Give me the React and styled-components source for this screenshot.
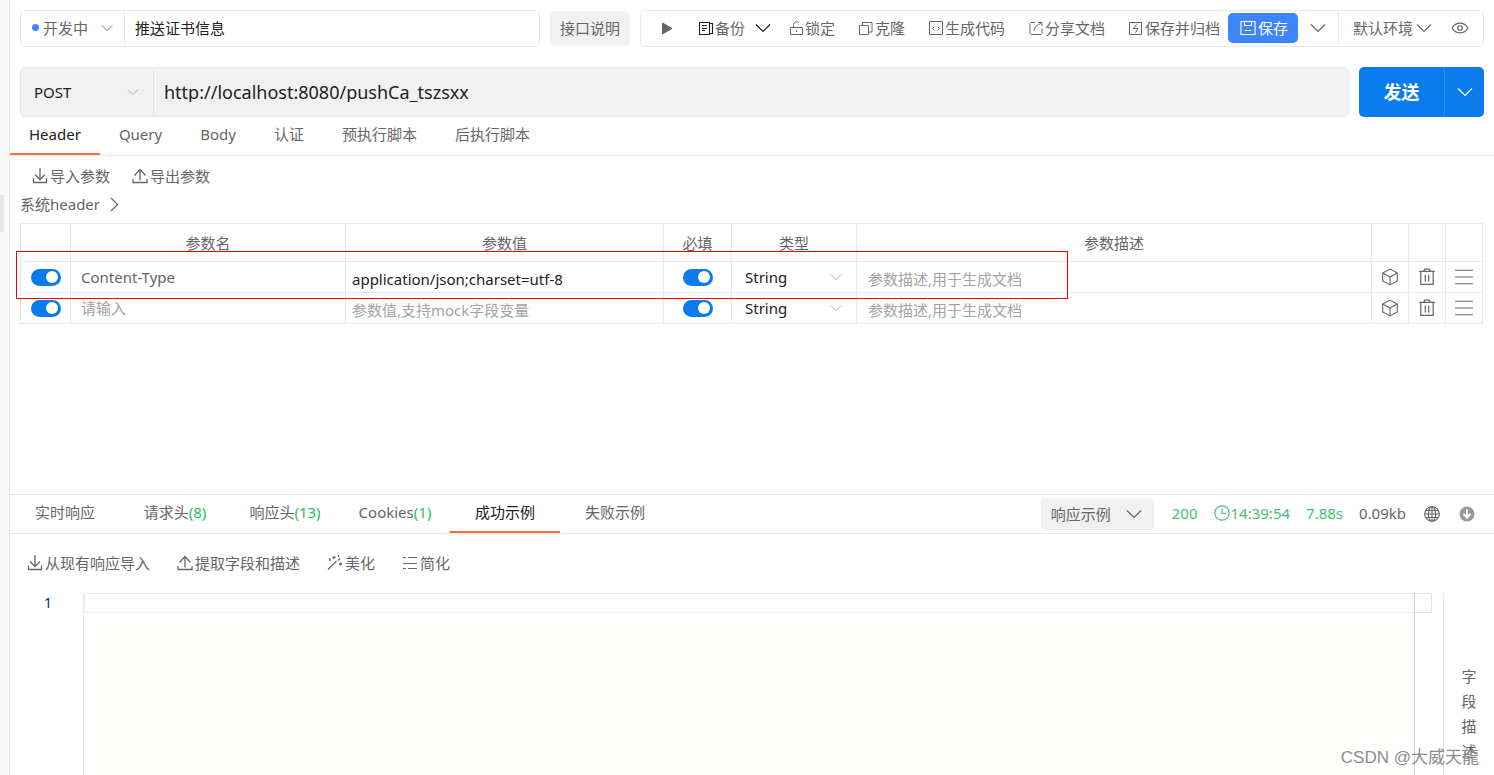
import React, { useState } from 'react';
import styled, { ThemeProvider, createGlobalStyle, css } from 'styled-components';

const theme = {
  colors: {
    text: '#666666',
    dark: '#212121',
    placeholder: '#a3a3a3',
    border: '#e9e9e9',
    fill: '#f1f1f1',
    blue: '#097bed',
    saveBlue: '#3c85ff',
    orange: '#ff6c37',
    green: '#3fc36f',
    countGreen: '#1fbf5c',
    red: '#f00000',
  },
};

const GlobalStyle = createGlobalStyle`
  *,
  *::before {
    box-sizing: border-box;
  }

  body {
    margin: 0;
    overflow: hidden;
    background: #fff;
  }

  body,
  button,
  input,
  select,
  textarea {
    font-family: 'Noto Sans', 'Noto Sans CJK SC', sans-serif;
    font-size: 15px;
    line-height: 20px;
  }

  button,
  input,
  select,
  textarea {
    border: 0;
    margin: 0;
    padding: 0;
    background: none;
    color: inherit;
    outline: none;
  }

  button,
  select {
    cursor: pointer;
  }
`;

/* ---------- icons ---------- */

const Svg = styled.svg`
  display: block;
  flex: none;
  fill: none;
  stroke: currentColor;
  stroke-width: ${({ $weight }) => $weight || 1};
`;

const Icon = ({ size = 16, weight, children }) => (
  <Svg width={size} height={size} viewBox="0 0 16 16" $weight={weight} aria-hidden="true">
    {children}
  </Svg>
);

const ChevronDown = ({ size, weight }) => (
  <Icon size={size} weight={weight || 1.2}><path d="M1 4.5l7 7 7-7" /></Icon>
);
const ChevronRight = () => <Icon weight={1.2}><path d="M5 2l6.500 6.500-6.500 6.500" /></Icon>;
const Play = () => (
  <Icon><path d="M3.500 3L13 8.500l-9.500 5.500z" fill="currentColor" strokeLinejoin="round" /></Icon>
);
const Backup = () => (
  <Icon weight={1.1}>
    <path d="M1.500 2.500h10v12h-10zM11.500 3.500h3v10h-3M4 5.500h5M4 8.500h5M4 10.500h3" />
  </Icon>
);
const Lock = () => (
  <Icon>
    <path d="M2.500 7.500h12v7h-12zM5.500 7.500V4.500a3 3 0 0 1 5.500-1.500M8.500 10v2" />
  </Icon>
);
const Clone = () => (
  <Icon><path d="M1.500 5.500h9v9h-9zM4.500 5.500v-3h9.500v9.500h-3.500" strokeLinejoin="round" /></Icon>
);
const Code = () => (
  <Icon><path d="M1.500 1.500h13v13h-13zM6.500 6.500L4.500 8.500l2 2M9.500 6.500l2 2-2 2" /></Icon>
);
const Share = () => (
  <Icon><path d="M7 2.500H3l-1 1v10l1 1h10l1-1V8.500M6 10.500C6.500 7 9 4.500 13 3.500M10 2.500h4V6" /></Icon>
);
const Archive = () => (
  <Icon><path d="M1.500 2.500h12v12h-12zM8.500 4.500L5.500 8.500h4.500L7.500 12.500" /></Icon>
);
const Save = () => (
  <Icon weight={1.2}><path d="M1 1.500h14v13H1zM4.500 1.500v4h7v-4M5 10.500h6" /></Icon>
);
const Eye = () => (
  <Icon size={18} weight={1.1}>
    <path d="M1 8c3.500-5.800 10.500-5.800 14 0-3.500 5.800-10.500 5.800-14 0z" />
    <circle cx="8" cy="8" r="2" />
  </Icon>
);
const Import = () => (
  <Icon weight={1.3}><path d="M8 0v11.500M3 6.500L8 11.500l5-5M1.500 10.500v4h13v-4" /></Icon>
);
const Export = () => (
  <Icon weight={1.3}><path d="M8 12.500V1.500M2.500 7.500L8 1.500l5.500 6M1 11v3.500h14V11" /></Icon>
);
const Wand = () => (
  <Icon weight={1.3}>
    <path d="M1 14.500L9.500 6M7 1v3M5.500 2.500h3M11.500 0v2M13.500 7.500v3M12 9h3M2 5h2M2.500 3v1M13 3.500L11 5.500" />
  </Icon>
);
const Simplify = () => (
  <Icon weight={1.2}>
    <path d="M1 2.500h3M6 2.500h9M1 8.500h14M1 13.500h3M6 13.500h9" />
  </Icon>
);
const Cube = () => (
  <Icon size={18}>
    <path d="M8 1l6.500 3.500v7L8 15l-6.500-3.500v-7zM1.500 4.500L8 8l6.500-3.500M8 8v7" strokeLinejoin="round" />
  </Icon>
);
const Trash = () => (
  <Icon size={18} weight={1.1}>
    <path d="M1 3h14M5 3l1-2h4l1 2M2.500 3v11.500h11V3M6.500 6v6M9.500 6v6" />
  </Icon>
);
const Menu = () => (
  <Icon size={18} weight={1.1}><path d="M0 2h16M0 8h16M0 14h16" /></Icon>
);
const Clock = () => (
  <Icon weight={1.2}><circle cx="8" cy="8" r="7.200" /><path d="M8 3.500v5h4" /></Icon>
);
const Globe = () => (
  <Icon weight={1.1}>
    <circle cx="8" cy="8" r="7.300" />
    <ellipse cx="8" cy="8" rx="3.600" ry="7.300" />
    <path d="M8 .7v14.600M.7 8h14.600M2 4.500h12M2 11.500h12" />
  </Icon>
);
const Download = () => (
  <Icon>
    <circle cx="8" cy="8" r="7.500" fill="#999" stroke="none" />
    <path d="M8 3.500v7M4.500 8L8 11.500 11.500 8" stroke="#fff" strokeWidth="2" />
  </Icon>
);

/* ---------- shell ---------- */

const Page = styled.div`
  position: relative;
  display: flex;
  height: 100vh;
  overflow: hidden;
  color: ${({ theme }) => theme.colors.text};
`;

const Gutter = styled.aside`
  flex: none;
  width: 10px;
  padding-top: 195px;
  background: #f9f9f9;
  border-right: 1px solid ${({ theme }) => theme.colors.border};
`;

const Grip = styled.div`
  width: 4px;
  height: 37px;
  background: #e6e6e6;
`;

const Main = styled.main`
  flex: 1;
  min-width: 0;
  display: grid;
  grid-template-columns: minmax(0, 1fr);
  grid-template-rows: minmax(0, 494fr) minmax(0, 281fr);
`;

const Pane = styled.section`
  display: flex;
  flex-direction: column;
  min-width: 0;
`;

const ResponsePane = styled(Pane)`
  border-top: 1px solid ${({ theme }) => theme.colors.border};
`;

/* ---------- selects ---------- */

const SelectBox = styled.label`
  display: grid;
  align-items: center;
  width: ${({ $width }) => ($width ? `${$width}px` : 'auto')};
  padding: ${({ $pad }) => $pad || 0};
  color: ${({ theme, $dark }) => ($dark ? theme.colors.dark : 'inherit')};

  select {
    grid-area: 1 / 1;
    appearance: none;
    width: 100%;
  }

  svg {
    grid-area: 1 / 1;
    justify-self: end;
    pointer-events: none;
    color: ${({ $faint }) => ($faint ? '#aaa' : 'inherit')};
  }
`;

const Select = ({ label, options, chevron = 12, ...rest }) => (
  <SelectBox {...rest}>
    <select aria-label={label}>
      {options.map((option) => <option key={option}>{option}</option>)}
    </select>
    <ChevronDown size={chevron} />
  </SelectBox>
);

/* ---------- top bar ---------- */

const TopBar = styled.header`
  display: flex;
  align-items: center;
  gap: 10px;
  padding: 10px 10px 0;
`;

const boxed = css`
  display: flex;
  align-items: center;
  height: 37px;
  padding-bottom: 2px;
  border: 1px solid ${({ theme }) => theme.colors.border};
  border-radius: 5px;
`;

const NameBox = styled.div`
  ${boxed}
  flex: 1;
  min-width: 0;
  align-items: stretch;
  padding-bottom: 0;
`;

const Status = styled.div`
  display: flex;
  align-items: center;
  gap: 4px;
  width: 104px;
  padding: 0 11px 2px;
  border-right: 1px solid ${({ theme }) => theme.colors.border};
`;

const Dot = styled.span`
  width: 7px;
  height: 7px;
  border-radius: 50%;
  background: ${({ theme }) => theme.colors.saveBlue};
`;

const TextInput = styled.input`
  flex: 1;
  min-width: 0;
  width: 100%;
  padding: 0 10px ${({ $large }) => ($large ? 0 : '2px')};
  color: ${({ theme }) => theme.colors.dark};
  font-size: ${({ $large }) => ($large ? '18px' : '15px')};
`;

const NoteButton = styled.button`
  height: 35px;
  padding: 0 10px 2px;
  border-radius: 5px;
  background: ${({ theme }) => theme.colors.fill};
`;

const Toolbar = styled.div`
  ${boxed}
  padding-left: 18px;
`;

const Tools = styled.div`
  display: flex;
  align-items: center;
  gap: 23px;
  padding-right: 8px;
`;

const ToolButton = styled.button`
  display: flex;
  align-items: center;
  gap: 1px;
  white-space: nowrap;

  svg {
    color: ${({ theme, $strong }) => ($strong ? theme.colors.dark : 'inherit')};
  }
`;

const ToolGroup = styled.div`
  display: flex;
  align-items: center;
  gap: 10px;
  margin-right: -6px;

  > button:last-child {
    color: ${({ theme }) => theme.colors.dark};
  }
`;

const SaveButton = styled(ToolButton)`
  height: 30px;
  gap: 2px;
  padding: 0 10px 0 12px;
  border-radius: 5px;
  background: ${({ theme }) => theme.colors.saveBlue};
  color: #fff;
`;

const SaveMore = styled.button`
  display: flex;
  align-items: center;
  justify-content: center;
  width: 40px;
  height: 33px;
`;

const Environment = styled.div`
  display: flex;
  align-items: center;
  gap: 19px;
  height: 33px;
  padding: 0 14px;
  border-left: 1px solid ${({ theme }) => theme.colors.border};
`;

/* ---------- request line ---------- */

const RequestLine = styled.form`
  display: flex;
  gap: 10px;
  padding: 20px 10px 0;
`;

const UrlBox = styled.div`
  display: flex;
  align-items: center;
  flex: 1;
  min-width: 0;
  height: 50px;
  border: 1px solid #e6e6e6;
  border-radius: 5px;
  background: ${({ theme }) => theme.colors.fill};
`;

const Method = styled.div`
  display: flex;
  align-items: center;
  width: 133px;
  height: 45px;
  padding: 0 14px 0 13px;
  border-right: 1px solid #e2e2e2;

  label {
    flex: 1;
  }
`;

const SendGroup = styled.div`
  display: flex;
  width: 125px;
  height: 50px;
  border-radius: 5px;
  overflow: hidden;
  background: ${({ theme }) => theme.colors.blue};
  color: #fff;
`;

const SendButton = styled.button`
  flex: 1;
  font-size: 18px;
  font-weight: 700;
`;

const SendMore = styled.button`
  display: flex;
  align-items: center;
  justify-content: center;
  width: 40px;
  border-left: 1px solid #2b8df0;
`;

/* ---------- tabs ---------- */

const Tabs = styled.nav`
  display: flex;
  flex: none;
  height: 39px;
  border-bottom: 1px solid ${({ theme }) => theme.colors.border};
`;

const Tab = styled.button`
  padding: 0 19px 3px;
  border-bottom: 2px solid ${({ theme, $active }) => ($active ? theme.colors.orange : 'transparent')};
  color: ${({ theme, $active }) => ($active ? theme.colors.dark : 'inherit')};
  white-space: nowrap;
`;

const ResponseTab = styled(Tab)`
  width: 110px;
  padding: 0 0 2px;
`;

const Count = styled.span`
  color: ${({ theme }) => theme.colors.countGreen};
`;

/* ---------- params ---------- */

const Actions = styled.div`
  display: flex;
  gap: ${({ $gap }) => $gap}px;
  padding: ${({ $pad }) => $pad};
`;

const ActionButton = styled(ToolButton)`
  gap: 2px;
`;

const SystemHeader = styled.button`
  display: flex;
  align-items: center;
  align-self: flex-start;
  gap: 6px;
  margin: 8px 10px 9px;
`;

const Table = styled.table`
  width: calc(100% - 21px);
  margin: 0 11px 0 10px;
  border-collapse: collapse;
  table-layout: fixed;

  th,
  td {
    height: 31px;
    padding: 0;
    border: 1px solid ${({ theme }) => theme.colors.border};
    font-weight: 400;
  }

  th {
    height: 38px;
  }
`;

const CellInput = styled.input`
  display: block;
  width: 100%;
  height: 30px;
  padding-top: ${({ $low }) => ($low ? '3px' : 0)};
  padding-left: ${({ $indent }) => $indent}px;
  color: ${({ theme, $dark }) => ($dark ? theme.colors.dark : 'inherit')};

  &::placeholder {
    color: ${({ theme }) => theme.colors.placeholder};
  }
`;

const Switch = styled.input.attrs({ type: 'checkbox' })`
  appearance: none;
  display: flex;
  align-items: center;
  width: 30px;
  height: 17px;
  margin: 0 auto;
  padding: 0 3px;
  border-radius: 9px;
  background: #ccc;
  cursor: pointer;

  &::before {
    content: '';
    width: 12px;
    height: 12px;
    border-radius: 50%;
    background: #fff;
  }

  &:checked {
    justify-content: flex-end;
    background: ${({ theme }) => theme.colors.blue};
  }
`;

const CellButton = styled.button`
  display: block;
  margin: 0 auto;
`;

const Highlight = styled.div`
  position: absolute;
  top: 251px;
  left: 16px;
  width: 1052px;
  height: 48px;
  border: 1px solid ${({ theme }) => theme.colors.red};
  pointer-events: none;
`;

/* ---------- response ---------- */

const ResponseBar = styled(Tabs)`
  align-items: stretch;
  justify-content: space-between;
`;

const TabList = styled.div`
  display: flex;
`;

const Meta = styled.div`
  display: flex;
  align-items: center;
  padding-right: 19px;
  gap: 16px;
`;

const ExampleSelect = styled.div`
  height: 32px;
  display: flex;
  align-items: center;
  margin-right: 2px;
  padding: 0 12px 0 10px;
  border-radius: 4px;
  background: ${({ theme }) => theme.colors.fill};
`;

const Stat = styled.span`
  display: flex;
  align-items: center;
  gap: 1px;
  padding-bottom: 2px;
  color: ${({ theme, $good }) => ($good ? theme.colors.green : 'inherit')};
`;

const MetaIcons = styled.div`
  display: flex;
  gap: 19px;
  padding-left: 2px;
`;

const EditorArea = styled.div`
  display: flex;
  flex: 1;
  min-height: 0;
`;

const LineNumbers = styled.div`
  width: 73px;
  padding-right: 31px;
  color: #0b216f;
  font-size: 14px;
  text-align: right;
`;

const Editor = styled.div`
  display: flex;
  flex: 1;
  min-width: 0;
  border-left: 1px solid ${({ theme }) => theme.colors.border};
  background: #fffffe;
`;

const EditorText = styled.textarea`
  flex: 1;
  min-width: 0;
  height: 20px;
  padding: 0 4px;
  border: 1px solid #eee;
  border-right: 0;
  font-size: 14px;
  line-height: 18px;
  resize: none;
  overflow: hidden;
`;

const Ruler = styled.div`
  width: 18px;
  border-left: 1px solid #d3d3d3;

  &::before {
    content: '';
    display: block;
    height: 20px;
    border: 1px solid #e4e4e4;
    border-left: 0;
  }
`;

const FieldPanel = styled.button`
  display: flex;
  align-items: flex-start;
  width: 51px;
  margin-left: 11px;
  padding: 71px 17px 0;
  border-left: 1px solid ${({ theme }) => theme.colors.border};
  line-height: 25px;
  word-break: break-all;
`;

const Watermark = styled.div`
  position: absolute;
  right: 15px;
  bottom: 7px;
  color: #8c8c8c;
  font-family: 'Liberation Sans', 'Noto Sans CJK SC', sans-serif;
  font-size: 17px;
`;

const requestTabs = ['Header', 'Query', 'Body', '认证', '预执行脚本', '后执行脚本'];

const responseTabs = [
  { name: '实时响应' },
  { name: '请求头', count: 8 },
  { name: '响应头', count: 13 },
  { name: 'Cookies', count: 1 },
  { name: '成功示例' },
  { name: '失败示例' },
];

const tools = [
  { name: '锁定', icon: Lock },
  { name: '克隆', icon: Clone },
  { name: '生成代码', icon: Code },
  { name: '分享文档', icon: Share },
  { name: '保存并归档', icon: Archive },
];

const responseActions = [
  { name: '从现有响应导入', icon: Import },
  { name: '提取字段和描述', icon: Export },
  { name: '美化', icon: Wand },
  { name: '简化', icon: Simplify },
];

const params = [
  { id: 1, name: 'Content-Type', value: 'application/json;charset=utf-8' },
  { id: 2, name: '', value: '' },
];

const columns = [50, 275, 318, 68, 125, null, 37, 37, 37];
const headings = ['', '参数名', '参数值', '必填', '类型', '参数描述', '', '', ''];

const ParamRow = ({ param }) => (
  <tr>
    <td><Switch aria-label="启用" defaultChecked /></td>
    <td>
      <CellInput aria-label="参数名" $indent={10} placeholder="请输入" defaultValue={param.name} />
    </td>
    <td>
      <CellInput
        aria-label="参数值"
        $indent={6}
        $dark
        $low
        placeholder="参数值,支持mock字段变量"
        defaultValue={param.value}
      />
    </td>
    <td><Switch aria-label="必填" defaultChecked /></td>
    <td>
      <Select label="类型" options={['String', 'Integer', 'Boolean']} $pad="0 14px 0 13px" $dark $faint />
    </td>
    <td>
      <CellInput aria-label="参数描述" $indent={11} $low placeholder="参数描述,用于生成文档" />
    </td>
    <td><CellButton aria-label="模型"><Cube /></CellButton></td>
    <td><CellButton aria-label="删除"><Trash /></CellButton></td>
    <td><CellButton aria-label="排序"><Menu /></CellButton></td>
  </tr>
);

export default function App() {
  const [requestTab, setRequestTab] = useState('Header');
  const [responseTab, setResponseTab] = useState('成功示例');

  return (
    <ThemeProvider theme={theme}>
      <GlobalStyle />
      <Page>
        <Gutter><Grip /></Gutter>
        <Main>
          <Pane>
            <TopBar>
              <NameBox>
                <Status>
                  <Dot />
                  <Select label="状态" options={['开发中', '已完成']} $width={70} />
                </Status>
                <TextInput aria-label="接口名称" defaultValue="推送证书信息" />
              </NameBox>
              <NoteButton>接口说明</NoteButton>
              <Toolbar>
                <Tools>
                  <ToolButton aria-label="运行"><Play /></ToolButton>
                  <ToolGroup>
                    <ToolButton $strong><Backup />备份</ToolButton>
                    <ToolButton aria-label="更多备份"><ChevronDown size={16} /></ToolButton>
                  </ToolGroup>
                  {tools.map(({ name, icon: ToolIcon }) => (
                    <ToolButton key={name}><ToolIcon />{name}</ToolButton>
                  ))}
                </Tools>
                <SaveButton><Save />保存</SaveButton>
                <SaveMore aria-label="更多保存"><ChevronDown size={16} /></SaveMore>
                <Environment>
                  <Select label="环境" options={['默认环境']} chevron={16} $width={79} />
                  <ToolButton aria-label="查看环境"><Eye /></ToolButton>
                </Environment>
              </Toolbar>
            </TopBar>
            <RequestLine onSubmit={(e) => e.preventDefault()}>
              <UrlBox>
                <Method>
                  <Select label="请求方法" options={['POST', 'GET', 'PUT', 'DELETE']} $dark $faint />
                </Method>
                <TextInput $large aria-label="URL" defaultValue="http://localhost:8080/pushCa_tszsxx" />
              </UrlBox>
              <SendGroup>
                <SendButton type="submit">发送</SendButton>
                <SendMore type="button" aria-label="更多发送"><ChevronDown size={16} /></SendMore>
              </SendGroup>
            </RequestLine>
            <Tabs>
              {requestTabs.map((name) => (
                <Tab key={name} $active={name === requestTab} onClick={() => setRequestTab(name)}>
                  {name}
                </Tab>
              ))}
            </Tabs>
            <Actions $gap={22} $pad="10px 22px 0">
              <ActionButton><Import />导入参数</ActionButton>
              <ActionButton><Export />导出参数</ActionButton>
            </Actions>
            <SystemHeader>系统header<ChevronRight /></SystemHeader>
            <Table>
              <colgroup>
                {columns.map((width, i) => <col key={i} width={width || undefined} />)}
              </colgroup>
              <thead>
                <tr>{headings.map((heading, i) => <th key={i}>{heading}</th>)}</tr>
              </thead>
              <tbody>
                {params.map((param) => <ParamRow key={param.id} param={param} />)}
              </tbody>
            </Table>
          </Pane>
          <ResponsePane>
            <ResponseBar>
              <TabList>
                {responseTabs.map(({ name, count }) => (
                  <ResponseTab
                    key={name}
                    $active={name === responseTab}
                    onClick={() => setResponseTab(name)}
                  >
                    {name}
                    {count && <Count>({count})</Count>}
                  </ResponseTab>
                ))}
              </TabList>
              <Meta>
                <ExampleSelect>
                  <Select label="响应示例" options={['响应示例']} chevron={16} $width={91} />
                </ExampleSelect>
                <Stat $good>200</Stat>
                <Stat $good><Clock />14:39:54</Stat>
                <Stat $good>7.88s</Stat>
                <Stat>0.09kb</Stat>
                <MetaIcons>
                  <ToolButton aria-label="网络"><Globe /></ToolButton>
                  <ToolButton aria-label="下载"><Download /></ToolButton>
                </MetaIcons>
              </Meta>
            </ResponseBar>
            <Actions $gap={27} $pad="19px 17px 20px">
              {responseActions.map(({ name, icon: ActionIcon }) => (
                <ActionButton key={name}><ActionIcon />{name}</ActionButton>
              ))}
            </Actions>
            <EditorArea>
              <LineNumbers>1</LineNumbers>
              <Editor>
                <EditorText aria-label="响应内容" />
                <Ruler />
              </Editor>
              <FieldPanel>字段描述</FieldPanel>
            </EditorArea>
          </ResponsePane>
        </Main>
        <Highlight />
        <Watermark>CSDN @大威天龍</Watermark>
      </Page>
    </ThemeProvider>
  );
}
